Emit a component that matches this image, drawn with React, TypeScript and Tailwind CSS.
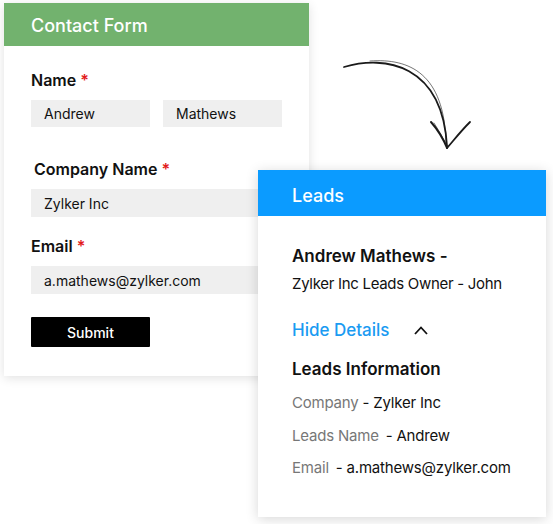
export default function App() {
  return (
    <main className="relative w-[553px] h-[524px] bg-white overflow-hidden font-['Inter',sans-serif] text-[#111]">
      {/* contact form card */}
      <section className="absolute left-[4px] top-[3px] w-[305px] h-[373px] bg-white shadow-[0_2px_10px_rgba(0,0,0,0.12)]">
        <div className="h-[43px] bg-[#72b26e] flex items-center pl-[27px] pt-[2px]">
          <h1 className="text-white text-[18px] font-medium">Contact Form</h1>
        </div>
        <div className="pl-[27px] pt-[24px] flex flex-col">
          <label className="text-[16px] font-semibold leading-[20px]">
            Name <span className="text-[#e21b1b]">*</span>
          </label>
          <div className="flex gap-[13px] mt-[10px]">
            <div className="w-[119px] h-[27px] bg-[#efefef] flex items-center pl-[13px] text-[14px]">Andrew</div>
            <div className="w-[119px] h-[27px] bg-[#efefef] flex items-center pl-[13px] text-[14px]">Mathews</div>
          </div>
          <label className="mt-[32px] pl-[3px] text-[16px] font-semibold leading-[20px]">
            Company Name <span className="text-[#e21b1b]">*</span>
          </label>
          <div className="mt-[10px] w-[251px] h-[28px] bg-[#efefef] flex items-center pl-[13px] text-[14px]">Zylker Inc</div>
          <label className="mt-[19px] text-[16px] font-semibold leading-[20px]">
            Email <span className="text-[#e21b1b]">*</span>
          </label>
          <div className="mt-[10px] w-[251px] h-[28px] bg-[#efefef] flex items-center pl-[13px] text-[14px]">a.mathews@zylker.com</div>
          <button className="mt-[23px] w-[119px] h-[30px] bg-black text-white text-[14px] font-medium rounded-[1px]">Submit</button>
        </div>
      </section>

      {/* sketched arrow */}
      <svg className="absolute left-[330px] top-[50px]" width="150" height="110" viewBox="0 0 150 110" fill="none" stroke="#1a1a1a" strokeLinecap="round">
        <path d="M14 17 C 55 5, 112 14, 117 96" strokeWidth="1.8" />
        <path d="M40 11 C 80 8, 114 24, 116 92" strokeWidth="1" opacity="0.6" />
        <path d="M101 72 C 108 80, 113 88, 117 98" strokeWidth="2" />
        <path d="M104 73 C 110 82, 114 91, 118 97" strokeWidth="1" opacity="0.6" />
        <path d="M140 72 C 130 82, 124 90, 117 98" strokeWidth="1.8" />
      </svg>

      {/* leads card */}
      <section className="absolute left-[258px] top-[170px] w-[288px] h-[347px] bg-white shadow-[0_2px_12px_rgba(0,0,0,0.16)]">
        <div className="h-[46px] bg-[#0b9bff] flex items-center pl-[34px] pt-[4px]">
          <h2 className="text-white text-[18px] font-medium">Leads</h2>
        </div>
        <div className="pl-[34px] pt-[29px] flex flex-col">
          <p className="text-[17px] font-semibold leading-[22px]">Andrew Mathews -</p>
          <p className="mt-[6px] text-[15px] tracking-[-0.3px] leading-[22px]">Zylker Inc Leads Owner - John</p>
          <div className="mt-[24px] flex items-center gap-[24px]">
            <span className="text-[17px] font-medium text-[#1a9bf2] leading-[22px]">Hide Details</span>
            <svg width="16" height="10" viewBox="0 0 16 10" fill="none" stroke="#111" strokeWidth="1.8">
              <path d="M2 9 L8 2.5 L14 9" />
            </svg>
          </div>
          <p className="mt-[17px] text-[17px] font-semibold leading-[22px]">Leads Information</p>
          <p className="mt-[12px] text-[15px] tracking-[-0.2px] leading-[22px]">
            <span className="text-[#777]">Company</span> - Zylker Inc
          </p>
          <p className="mt-[11px] text-[15px] tracking-[-0.2px] leading-[22px]">
            <span className="text-[#777] mr-[7px]">Leads Name</span>- Andrew
          </p>
          <p className="mt-[10px] text-[15px] tracking-[-0.2px] leading-[22px]">
            <span className="text-[#777] mr-[7px]">Email</span>- a.mathews@zylker.com
          </p>
        </div>
      </section>
    </main>
  )
}
